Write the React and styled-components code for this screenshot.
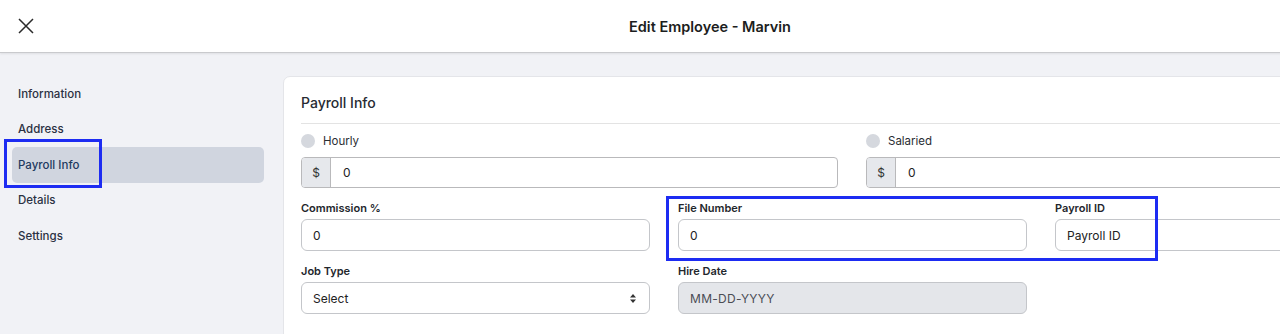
import styled, { createGlobalStyle } from "styled-components";

const GlobalStyle = createGlobalStyle`
  body {
    margin: 0;
    background: #f1f2f6;
    font-family: Inter, "Noto Sans", sans-serif;
    color: #23272f;
    overflow: hidden;
  }
`;

const Page = styled.div`
  position: relative;
  width: 1420px;
  height: 334px;
  overflow: hidden;
`;

const Header = styled.header`
  height: 52px;
  background: #fff;
  border-bottom: 1px solid #c9cacd;
  box-shadow: 0 1px 2px rgba(0, 0, 0, 0.08);
  display: flex;
  align-items: center;
  position: relative;
`;

const CloseButton = styled.button`
  border: 0;
  background: none;
  padding: 0;
  margin-left: 17px;
  width: 18px;
  height: 18px;
  display: flex;
  cursor: pointer;
`;

const Title = styled.h1`
  position: absolute;
  left: 0;
  right: 0;
  margin: 0;
  text-align: center;
  font-size: 14.5px;
  font-weight: 600;
  color: #1c1d20;
  pointer-events: none;
`;

const Body = styled.div`
  display: flex;
`;

const Sidebar = styled.nav`
  width: 283px;
  flex: none;
  box-sizing: border-box;
  padding: 23px 19px 0 12px;
  display: flex;
  flex-direction: column;
`;

const NavItem = styled.a`
  height: 35.5px;
  display: flex;
  align-items: center;
  padding-left: 6px;
  border-radius: 5px;
  font-size: 11.5px;
  font-weight: 500;
  color: ${(p) => (p.$active ? "#1f3a60" : "#2b3142")};
  background: ${(p) => (p.$active ? "#d0d5df" : "transparent")};
  text-decoration: none;
`;

const Card = styled.section`
  margin-top: 23px;
  width: 1137px;
  flex: none;
  box-sizing: border-box;
  background: #fff;
  border: 1px solid #e4e5e9;
  border-radius: 7px;
  padding: 16px 16px 40px 17px;
`;

const CardTitle = styled.h2`
  margin: 0;
  font-size: 14px;
  line-height: 20px;
  font-weight: 500;
  color: #272b33;
  padding-bottom: 10px;
  border-bottom: 1px solid #e3e3e3;
`;

const PayRow = styled.div`
  display: grid;
  grid-template-columns: 537px 537px;
  column-gap: 28px;
  margin-top: 10px;
`;

const PayCol = styled.div`
  display: flex;
  flex-direction: column;
  gap: 9px;
`;

const RadioLabel = styled.label`
  display: flex;
  align-items: center;
  gap: 8px;
  height: 14px;
  font-size: 11.5px;
  color: #2a2d33;
`;

const RadioDot = styled.span`
  width: 14px;
  height: 14px;
  border-radius: 50%;
  background: #d5d8de;
  flex: none;
`;

const InputGroup = styled.div`
  display: flex;
  height: 31px;
  box-sizing: border-box;
  border: 1px solid #b9b9bb;
  border-radius: 4px;
  overflow: hidden;
`;

const Prefix = styled.span`
  width: 28px;
  flex: none;
  display: flex;
  align-items: center;
  justify-content: center;
  background: #e6e8ec;
  border-right: 1px solid #b9b9bb;
  font-size: 12px;
  color: #333;
`;

const GroupValue = styled.span`
  display: flex;
  align-items: center;
  padding-left: 12px;
  font-size: 12px;
  color: #222;
`;

const FieldGrid = styled.div`
  display: grid;
  grid-template-columns: repeat(3, 349px);
  column-gap: 28px;
  row-gap: 13px;
  margin-top: 13px;
`;

const Field = styled.div`
  display: flex;
  flex-direction: column;
  gap: 4px;
`;

const FieldLabel = styled.label`
  font-size: 11px;
  line-height: 14px;
  font-weight: 600;
  color: #23262c;
`;

const Box = styled.div`
  height: 32px;
  box-sizing: border-box;
  border: 1px solid #c4c6ca;
  border-radius: 6px;
  display: flex;
  align-items: center;
  justify-content: space-between;
  padding: 0 12px 0 11px;
  font-size: 12px;
  color: ${(p) => (p.$disabled ? "#4a4d55" : "#222")};
  background: ${(p) => (p.$disabled ? "#e4e6ea" : "#fff")};
  letter-spacing: ${(p) => (p.$disabled ? "0.3px" : "0")};
`;

const Highlight = styled.div`
  position: absolute;
  box-sizing: border-box;
  border: 3px solid #1d2cf2;
  pointer-events: none;
`;

function CloseIcon() {
  return (
    <svg width="18" height="18" viewBox="0 0 18 18">
      <path d="M2 2 L16 16 M16 2 L2 16" stroke="#2b2b2b" strokeWidth="1.5" fill="none" />
    </svg>
  );
}

function SelectArrows() {
  return (
    <svg width="8" height="11" viewBox="0 0 8 11">
      <path d="M4 1 L7 4.5 H1 Z M4 10 L7 6.5 H1 Z" fill="#333" />
    </svg>
  );
}

export default function App() {
  const nav = ["Information", "Address", "Payroll Info", "Details", "Settings"];
  return (
    <Page>
      <GlobalStyle />
      <Header>
        <CloseButton aria-label="Close">
          <CloseIcon />
        </CloseButton>
        <Title>Edit Employee - Marvin</Title>
      </Header>
      <Body>
        <Sidebar>
          {nav.map((item) => (
            <NavItem key={item} href="#" $active={item === "Payroll Info"}>
              {item}
            </NavItem>
          ))}
        </Sidebar>
        <Card>
          <CardTitle>Payroll Info</CardTitle>
          <PayRow>
            <PayCol>
              <RadioLabel>
                <RadioDot />
                Hourly
              </RadioLabel>
              <InputGroup>
                <Prefix>$</Prefix>
                <GroupValue>0</GroupValue>
              </InputGroup>
            </PayCol>
            <PayCol>
              <RadioLabel>
                <RadioDot />
                Salaried
              </RadioLabel>
              <InputGroup>
                <Prefix>$</Prefix>
                <GroupValue>0</GroupValue>
              </InputGroup>
            </PayCol>
          </PayRow>
          <FieldGrid>
            <Field>
              <FieldLabel>Commission %</FieldLabel>
              <Box>0</Box>
            </Field>
            <Field>
              <FieldLabel>File Number</FieldLabel>
              <Box>0</Box>
            </Field>
            <Field>
              <FieldLabel>Payroll ID</FieldLabel>
              <Box>Payroll ID</Box>
            </Field>
            <Field>
              <FieldLabel>Job Type</FieldLabel>
              <Box>
                Select
                <SelectArrows />
              </Box>
            </Field>
            <Field>
              <FieldLabel>Hire Date</FieldLabel>
              <Box $disabled>MM-DD-YYYY</Box>
            </Field>
          </FieldGrid>
        </Card>
      </Body>
      <Highlight style={{ left: 4, top: 139, width: 98, height: 49 }} />
      <Highlight style={{ left: 666, top: 196, width: 492, height: 65 }} />
    </Page>
  );
}
